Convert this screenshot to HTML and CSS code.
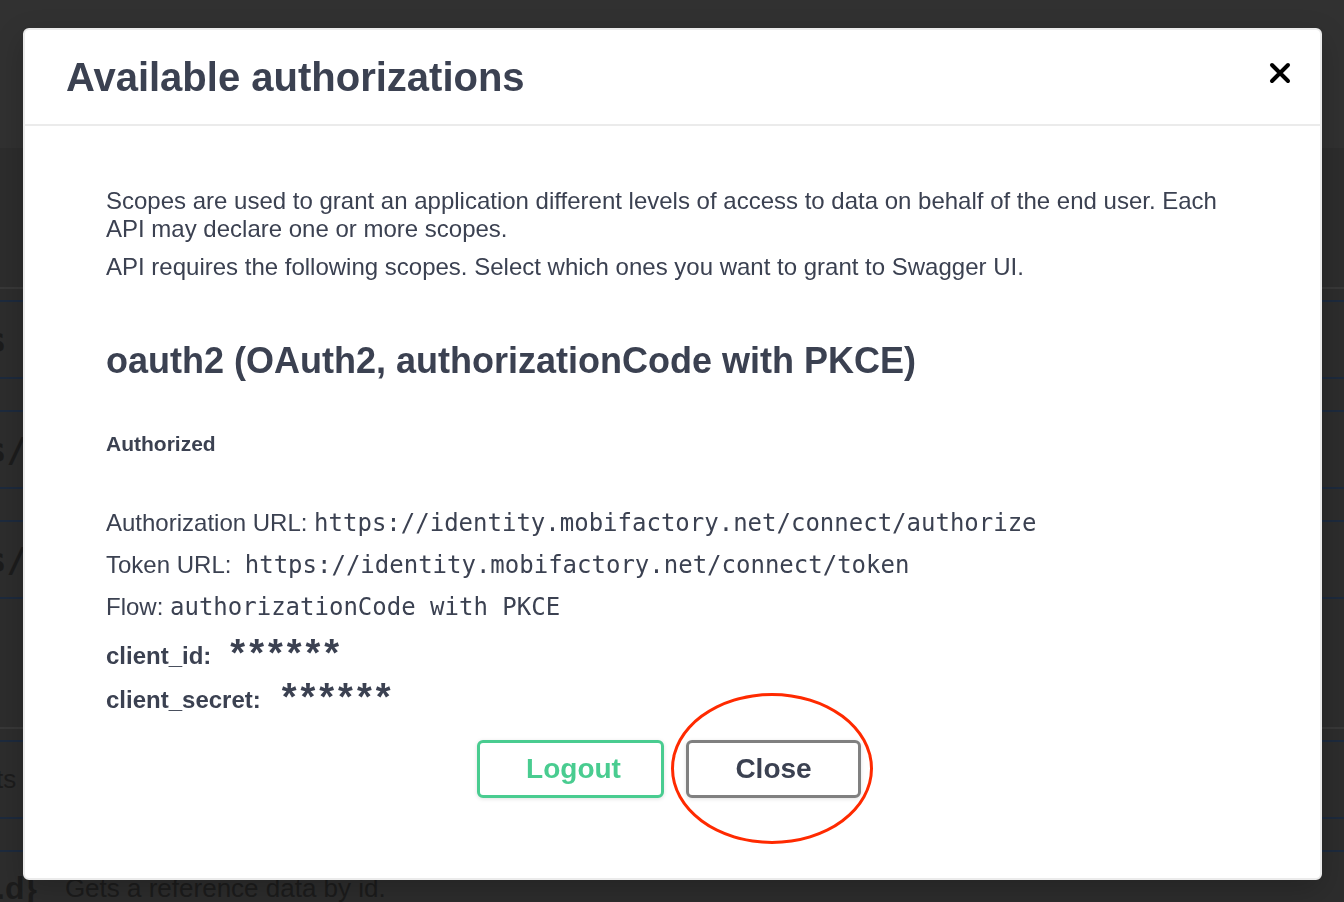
FILE: index.html
```html
<!DOCTYPE html>
<html>
<head>
<meta charset="utf-8">
<link rel="stylesheet" href="styles.css">
<title>Available authorizations</title>
</head>
<body>
<div class="page">
  <div class="topbar"></div>
  <div class="band"></div>
  <div class="section">
    <div class="gap-row"></div>
    <div class="op-row"><span class="op-path">s</span></div>
    <div class="spacer-row"></div>
    <div class="op-row"><span class="op-path">s/</span></div>
    <div class="spacer-row"></div>
    <div class="op-row"><span class="op-path">s/</span></div>
    <div class="tall-row"></div>
  </div>
  <div class="section second">
    <div class="gap-row small"></div>
    <div class="op-row"><span class="op-path thin">ts</span></div>
    <div class="spacer-row"></div>
    <div class="op-row last"><span class="op-path end">.d}</span><span class="op-desc">Gets a reference data by id.</span></div>
  </div>
</div>

<div class="modal">
  <div class="modal-header">
    <h3 class="modal-title">Available authorizations</h3>
    <button class="close-x" aria-label="Close">
      <svg width="22" height="22" viewBox="0 0 22 22"><path d="M3 3 L19 19 M19 3 L3 19" stroke="#000" stroke-width="4" stroke-linecap="round"/></svg>
    </button>
  </div>
  <div class="modal-body">
    <div class="scope-def">
      <p>Scopes are used to grant an application different levels of access to data on behalf of the end user. Each API may declare one or more scopes.</p>
      <p>API requires the following scopes. Select which ones you want to grant to Swagger UI.</p>
    </div>
    <h4 class="scheme-title">oauth2 (OAuth2, authorizationCode with PKCE)</h4>
    <h6 class="authorized">Authorized</h6>
    <p class="info first">Authorization URL: <code>https://identity.mobifactory.net/connect/authorize</code></p>
    <p class="info">Token URL: &nbsp;<code>https://identity.mobifactory.net/connect/token</code></p>
    <p class="info">Flow: <code>authorizationCode with PKCE</code></p>
    <div class="cred first"><label>client_id:</label><span class="stars">******</span></div>
    <div class="cred"><label>client_secret:</label><span class="stars">******</span></div>
    <div class="btns">
      <button class="btn logout">Logout</button>
      <button class="btn close">Close<span class="ring"></span></button>
    </div>
  </div>
</div>
</body>
</html>
```

FILE: styles.css
```css
html, body {
  margin: 0;
  padding: 0;
  height: 100%;
  overflow: hidden;
}
body {
  background: #2d2d2d;
  font-family: "Liberation Sans", Arial, sans-serif;
  color: #3b4151;
}
.page {
  display: flex;
  flex-direction: column;
}
.topbar {
  height: 148px;
  background: #313131;
}
.band {
  height: 139px;
  background: #2d2d2d;
  border-bottom: 2px solid #383838;
}
.section {
  display: flex;
  flex-direction: column;
}
.gap-row {
  height: 11px;
  border-bottom: 2px solid #1d2a3d;
}
.op-row {
  height: 75px;
  border-bottom: 2px solid #1d2a3d;
  display: flex;
  align-items: center;
  gap: 28px;
}
.spacer-row {
  height: 31px;
  border-bottom: 2px solid #1d2a3d;
}
.tall-row {
  height: 128px;
  border-bottom: 2px solid #383838;
}
.op-path {
  font-family: "DejaVu Sans Mono", monospace;
  font-weight: bold;
  font-size: 34px;
  color: #1c1c1c;
  margin-left: -14px;
}
.op-path.thin {
  font-family: "Liberation Sans", Arial, sans-serif;
  font-weight: normal;
  font-size: 26px;
  margin-left: -4px;
}
.op-path.end {
  font-family: "Liberation Sans", Arial, sans-serif;
  font-size: 32px;
  margin-left: -4px;
}
.op-row.last {
  border-bottom: none;
  align-items: flex-start;
  padding-top: 18px;
}
.op-desc {
  font-size: 26px;
  color: #1c1c1c;
  margin-top: 3px;
}

/* modal */
.modal {
  position: fixed;
  left: 23px;
  top: 28px;
  width: 1299px;
  height: 852px;
  box-sizing: border-box;
  background: #fff;
  border: 2px solid #ebebeb;
  border-radius: 6px;
  box-shadow: 0 10px 30px rgba(0, 0, 0, 0.2);
  display: flex;
  flex-direction: column;
}
.modal-header {
  height: 96px;
  flex: none;
  box-sizing: border-box;
  border-bottom: 2px solid #ebebeb;
  display: flex;
  align-items: center;
  justify-content: space-between;
  padding: 0 28px 0 41px;
}
.modal-title {
  margin: 0;
  font-size: 40px;
  font-weight: bold;
  color: #3b4151;
}
.close-x {
  background: none;
  border: none;
  padding: 0;
  width: 24px;
  height: 24px;
  display: flex;
  align-items: center;
  justify-content: center;
  margin-top: -8px;
}
.modal-body {
  padding: 61px 81px 0 81px;
}
.scope-def p {
  margin: 0 0 10px;
  font-size: 24px;
  line-height: 28px;
  color: #3b4151;
}
.scheme-title {
  margin: 60px 0 0;
  font-size: 36px;
  font-weight: bold;
  line-height: 40px;
}
.authorized {
  margin: 49px 0 0;
  font-size: 21px;
  font-weight: bold;
  line-height: 28px;
}
.info {
  margin: 14px 0 0;
  font-size: 24px;
  line-height: 28px;
}
.info.first {
  margin-top: 51px;
}
.info code {
  font-family: "DejaVu Sans Mono", monospace;
  font-size: 24px;
  color: #3b4151;
}
.cred {
  display: flex;
  align-items: center;
  height: 28px;
  margin-top: 16px;
}
.cred.first {
  margin-top: 21px;
}
.cred label {
  font-size: 24px;
  font-weight: bold;
  line-height: 28px;
}
.stars {
  font-size: 38px;
  font-weight: bold;
  letter-spacing: 4px;
  line-height: 28px;
  margin-left: 21px;
  position: relative;
  top: -3px;
}
.cred.first .stars {
  margin-left: 19px;
}
.btns {
  display: flex;
  justify-content: center;
  gap: 22px;
  margin-top: 26px;
  margin-right: 7px;
}
.btn {
  height: 58px;
  box-sizing: border-box;
  border-radius: 6px;
  background: #fff;
  font-family: "Liberation Sans", Arial, sans-serif;
  font-weight: bold;
  font-size: 28px;
  box-shadow: 0 1px 4px rgba(0, 0, 0, 0.12);
  position: relative;
  padding: 0;
}
.logout {
  width: 187px;
  border: 3px solid #49cc90;
  color: #49cc90;
  padding-left: 6px;
}
.close {
  width: 175px;
  border: 3px solid #808080;
  color: #3b4151;
}
.ring {
  position: absolute;
  left: -18px;
  top: -50px;
  width: 202px;
  height: 151px;
  box-sizing: border-box;
  border: 3.5px solid #ff2a00;
  border-radius: 50%;
  pointer-events: none;
}
```
